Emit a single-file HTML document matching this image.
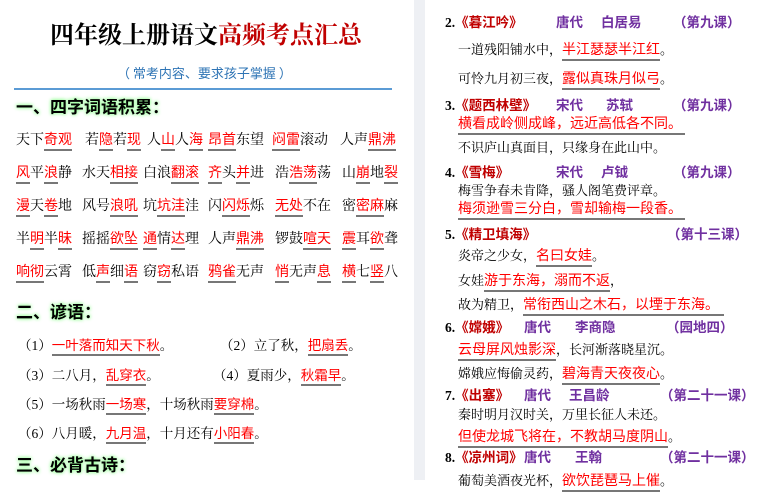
<!DOCTYPE html>
<html><head><meta charset="utf-8"><style>
*{margin:0;padding:0;box-sizing:border-box}
body{width:784px;height:480px;overflow:hidden;background:#fff;font-family:"Liberation Serif","Noto Serif CJK SC","Noto Sans CJK SC",serif;color:#000;position:relative}
.a{position:absolute;white-space:nowrap}
.r{color:#f00;font-family:"Noto Sans CJK SC",sans-serif;border-bottom:2px solid #777;line-height:1.05}
.h{font-family:"Noto Sans CJK SC",sans-serif;font-weight:bold;font-size:17px;text-shadow:0 0 3px #9f9,0 0 4px #9f9}
.g{font-size:14px}
.t{font-size:13.5px}
.s{font-size:13px}
.s .r{font-size:14px}
.p{color:#7030a0;font-weight:bold;font-family:"Noto Sans CJK SC",sans-serif}
.tt{color:#c00000;font-weight:bold;font-family:"Noto Sans CJK SC",sans-serif}
.n{font-weight:bold}
</style></head><body>
<div class="a" style="left:414px;top:0;width:11px;height:480px;background:#eef0f4"></div>
<div class="a" style="left:50px;top:15px;font-size:24px;font-family:'Noto Serif CJK SC',serif;font-weight:bold">四年级上册语文<span style="color:#c00000">高频考点汇总</span></div>
<div class="a" style="left:117px;top:63px;font-size:13px;color:#2e74b5;font-family:'Noto Sans CJK SC',sans-serif">（ 常考内容、要求孩子掌握 ）</div>
<div class="a" style="left:14px;top:88px;width:378px;height:2px;background:#5b9bd5"></div>
<div class="a h" style="left:16px;top:93px">一、四字词语积累：</div>
<div class="a g" style="left:16px;top:129px">天下<span class="r">奇观</span></div>
<div class="a g" style="left:85px;top:129px">若<span class="r">隐</span>若<span class="r">现</span></div>
<div class="a g" style="left:147px;top:129px">人<span class="r">山</span>人<span class="r">海</span></div>
<div class="a g" style="left:208px;top:129px"><span class="r">昂首</span>东望</div>
<div class="a g" style="left:272px;top:129px"><span class="r">闷雷</span>滚动</div>
<div class="a g" style="left:340px;top:129px">人声<span class="r">鼎沸</span></div>
<div class="a g" style="left:16px;top:162px"><span class="r">风</span>平<span class="r">浪</span>静</div>
<div class="a g" style="left:82px;top:162px">水天<span class="r">相接</span></div>
<div class="a g" style="left:143px;top:162px">白浪<span class="r">翻滚</span></div>
<div class="a g" style="left:208px;top:162px"><span class="r">齐</span>头<span class="r">并</span>进</div>
<div class="a g" style="left:275px;top:162px">浩<span class="r">浩荡</span>荡</div>
<div class="a g" style="left:342px;top:162px">山<span class="r">崩</span>地<span class="r">裂</span></div>
<div class="a g" style="left:16px;top:195px"><span class="r">漫</span>天<span class="r">卷</span>地</div>
<div class="a g" style="left:82px;top:195px">风号<span class="r">浪吼</span></div>
<div class="a g" style="left:143px;top:195px">坑<span class="r">坑洼</span>洼</div>
<div class="a g" style="left:208px;top:195px">闪<span class="r">闪烁</span>烁</div>
<div class="a g" style="left:275px;top:195px"><span class="r">无处</span>不在</div>
<div class="a g" style="left:342px;top:195px">密<span class="r">密麻</span>麻</div>
<div class="a g" style="left:16px;top:228px">半<span class="r">明</span>半<span class="r">昧</span></div>
<div class="a g" style="left:82px;top:228px">摇摇<span class="r">欲坠</span></div>
<div class="a g" style="left:143px;top:228px"><span class="r">通</span>情<span class="r">达</span>理</div>
<div class="a g" style="left:208px;top:228px">人声<span class="r">鼎沸</span></div>
<div class="a g" style="left:275px;top:228px">锣鼓<span class="r">喧天</span></div>
<div class="a g" style="left:342px;top:228px"><span class="r">震</span>耳<span class="r">欲</span>聋</div>
<div class="a g" style="left:16px;top:261px"><span class="r">响彻</span>云霄</div>
<div class="a g" style="left:82px;top:261px">低<span class="r">声</span>细<span class="r">语</span></div>
<div class="a g" style="left:143px;top:261px">窃<span class="r">窃</span>私语</div>
<div class="a g" style="left:208px;top:261px"><span class="r">鸦雀</span>无声</div>
<div class="a g" style="left:275px;top:261px"><span class="r">悄</span>无声<span class="r">息</span></div>
<div class="a g" style="left:342px;top:261px"><span class="r">横</span>七<span class="r">竖</span>八</div>
<div class="a h" style="left:16px;top:298px">二、谚语：</div>
<div class="a t" style="left:18px;top:334px">（1）<span class="r">一叶落而知天下秋</span>。</div>
<div class="a t" style="left:220px;top:334px">（2）立了秋，<span class="r">把扇丢</span>。</div>
<div class="a t" style="left:18px;top:364px">（3）二八月，<span class="r">乱穿衣</span>。</div>
<div class="a t" style="left:213px;top:364px">（4）夏雨少，<span class="r">秋霜早</span>。</div>
<div class="a t" style="left:18px;top:393px">（5）一场秋雨<span class="r">一场寒</span>，十场秋雨<span class="r">要穿棉</span>。</div>
<div class="a t" style="left:18px;top:422px">（6）八月暖，<span class="r">九月温</span>，十月还有<span class="r">小阳春</span>。</div>
<div class="a h" style="left:16px;top:451px">三、必背古诗：</div>

<div class="a t" style="left:445px;top:11px"><span class="n">2.</span><span class="tt">《暮江吟》</span></div>
<div class="a t p" style="left:556px;top:11px">唐代</div><div class="a t p" style="left:601px;top:11px">白居易</div><div class="a t p" style="left:673px;top:11px">（第九课）</div>
<div class="a s" style="left:458px;top:39px">一道残阳铺水中，<span class="r">半江瑟瑟半江红</span>。</div>
<div class="a s" style="left:458px;top:68px">可怜九月初三夜，<span class="r">露似真珠月似弓</span>。</div>
<div class="a t" style="left:445px;top:94px"><span class="n">3.</span><span class="tt">《题西林壁》</span></div>
<div class="a t p" style="left:556px;top:94px">宋代</div><div class="a t p" style="left:606px;top:94px">苏轼</div><div class="a t p" style="left:673px;top:94px">（第九课）</div>
<div class="a s" style="left:458px;top:116px"><span class="r" style="padding-right:3px">横看成岭侧成峰，远近高低各不同。</span></div>
<div class="a s" style="left:458px;top:137px">不识庐山真面目，只缘身在此山中。</div>
<div class="a t" style="left:445px;top:161px"><span class="n">4.</span><span class="tt">《雪梅》</span></div>
<div class="a t p" style="left:556px;top:161px">宋代</div><div class="a t p" style="left:601px;top:161px">卢钺</div><div class="a t p" style="left:673px;top:161px">（第九课）</div>
<div class="a s" style="left:458px;top:180px">梅雪争春未肯降，骚人阁笔费评章。</div>
<div class="a s" style="left:458px;top:201px"><span class="r" style="padding-right:3px">梅须逊雪三分白，雪却输梅一段香。</span></div>
<div class="a t" style="left:445px;top:223px"><span class="n">5.</span><span class="tt">《精卫填海》</span></div>
<div class="a t p" style="left:667px;top:223px">（第十三课）</div>
<div class="a s" style="left:458px;top:245px">炎帝之少女，<span class="r">名曰女娃</span>。</div>
<div class="a s" style="left:458px;top:270px">女娃<span class="r">游于东海，溺而不返</span>，</div>
<div class="a s" style="left:458px;top:294px">故为精卫，<span class="r" style="padding-right:5px">常衔西山之木石，以堙于东海。</span></div>
<div class="a t" style="left:445px;top:316px"><span class="n">6.</span><span class="tt">《嫦娥》</span></div>
<div class="a t p" style="left:524px;top:316px">唐代</div><div class="a t p" style="left:575px;top:316px">李商隐</div><div class="a t p" style="left:666px;top:316px">（园地四）</div>
<div class="a s" style="left:458px;top:339px"><span class="r">云母屏风烛影深</span>，长河渐落晓星沉。</div>
<div class="a s" style="left:458px;top:363px">嫦娥应悔偷灵药，<span class="r">碧海青天夜夜心</span>。</div>
<div class="a t" style="left:445px;top:384px"><span class="n">7.</span><span class="tt">《出塞》</span></div>
<div class="a t p" style="left:524px;top:384px">唐代</div><div class="a t p" style="left:569px;top:384px">王昌龄</div><div class="a t p" style="left:660px;top:384px">（第二十一课）</div>
<div class="a s" style="left:458px;top:404px">秦时明月汉时关，万里长征人未还。</div>
<div class="a s" style="left:458px;top:426px"><span class="r">但使龙城飞将在，不教胡马度阴山</span>。</div>
<div class="a t" style="left:445px;top:446px"><span class="n">8.</span><span class="tt">《凉州词》</span></div>
<div class="a t p" style="left:524px;top:446px">唐代</div><div class="a t p" style="left:575px;top:446px">王翰</div><div class="a t p" style="left:660px;top:446px">（第二十一课）</div>
<div class="a s" style="left:458px;top:470px">葡萄美酒夜光杯，<span class="r">欲饮琵琶马上催</span>。</div>
</body></html>
